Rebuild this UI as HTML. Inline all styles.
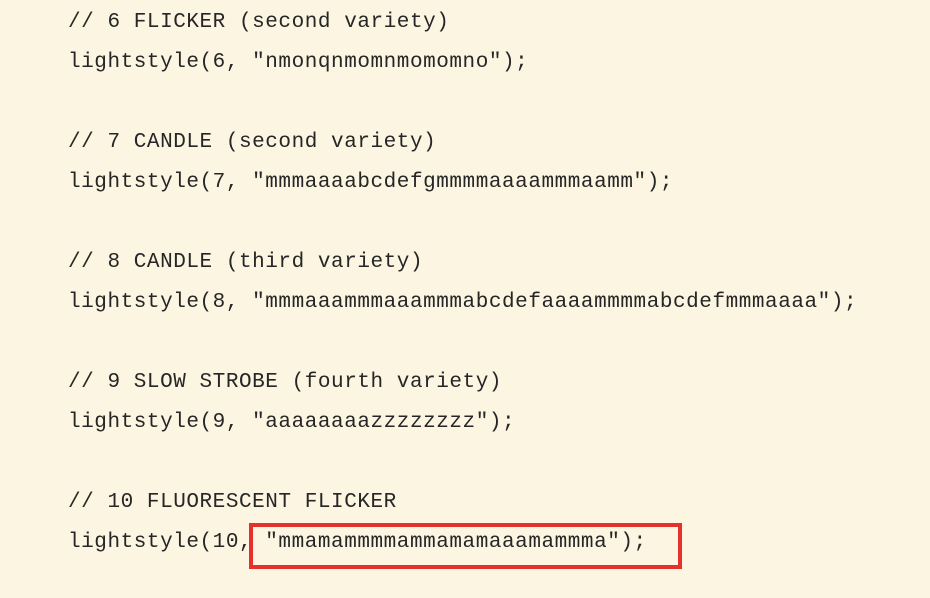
<!DOCTYPE html>
<html><head><style>
html,body{margin:0;padding:0;}
body{width:930px;height:598px;background:#fcf5e1;overflow:hidden;position:relative;}
pre{margin:0;position:absolute;left:68px;top:3px;font-family:"Liberation Mono",monospace;font-size:21px;letter-spacing:0.55px;line-height:40px;color:#262626;}
.box{position:absolute;left:249px;top:523px;width:425px;height:38px;border:4px solid #e5312b;}
</style></head><body>
<pre>// 6 FLICKER (second variety)
lightstyle(6, "nmonqnmomnmomomno");

// 7 CANDLE (second variety)
lightstyle(7, "mmmaaaabcdefgmmmmaaaammmaamm");

// 8 CANDLE (third variety)
lightstyle(8, "mmmaaammmaaammmabcdefaaaammmmabcdefmmmaaaa");

// 9 SLOW STROBE (fourth variety)
lightstyle(9, "aaaaaaaazzzzzzzz");

// 10 FLUORESCENT FLICKER
lightstyle(10, "mmamammmmammamamaaamammma");</pre>
<div class="box"></div>
</body></html>
